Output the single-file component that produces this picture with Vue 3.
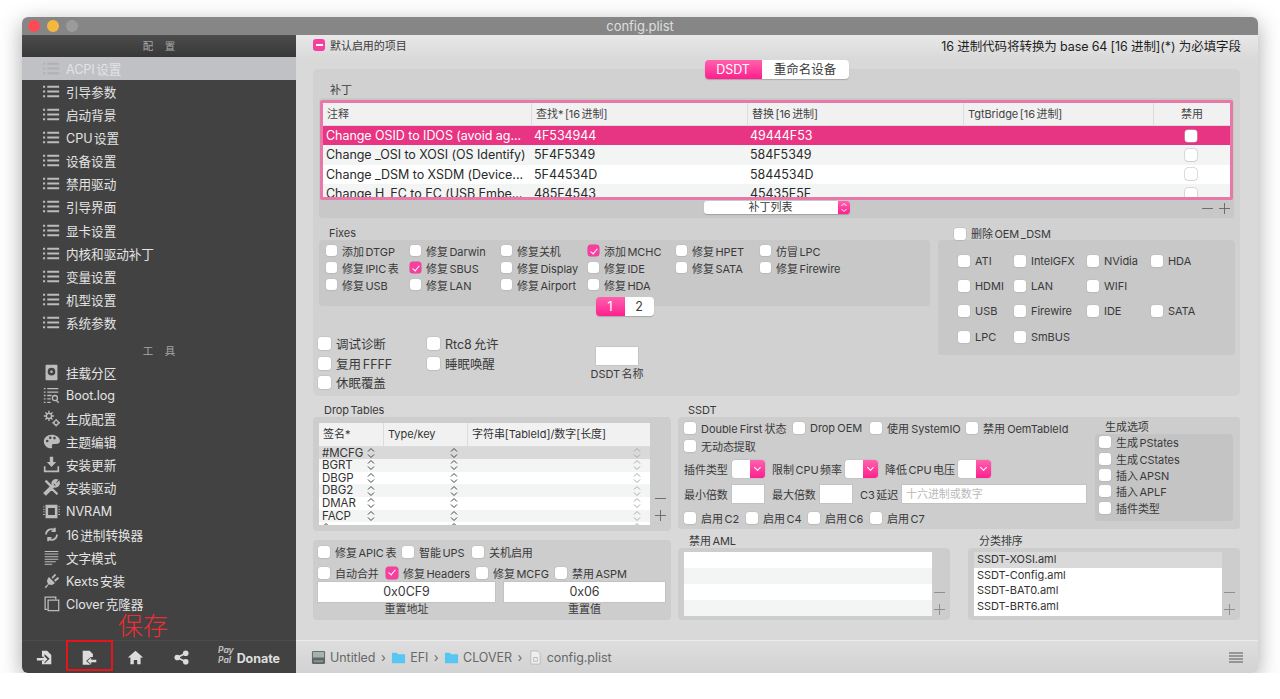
<template>
  <div class="window">
    <div class="titlebar">
      <span class="light red"></span>
      <span class="light yellow"></span>
      <span class="light grey"></span>
      <span class="title">config.plist</span>
    </div>

    <div class="body">
      <aside class="sidebar">
        <div class="side-head first">配&nbsp;&nbsp;&nbsp;&nbsp;置</div>
        <div v-for="(item, i) in configItems" :key="item" class="side-item" :class="{ selected: i === 0 }">
          <svg class="side-icon" viewBox="0 0 20 20">
            <path d="M0 4.500h2.500M5 4.500h14M0 10h2.500M5 10h14M0 15.500h2.500M5 15.500h14" fill="none" stroke="currentColor" stroke-width="2.400" />
          </svg>
          <span>{{ item }}</span>
        </div>

        <div class="side-head second">工&nbsp;&nbsp;&nbsp;&nbsp;具</div>
        <div v-for="tool in tools" :key="tool.label" class="side-item tool">
          <svg class="side-icon" viewBox="0 0 20 20">
            <path v-if="tool.fill" :d="tool.fill" fill="currentColor" fill-rule="evenodd" />
            <path v-if="tool.stroke" :d="tool.stroke" fill="none" stroke="currentColor" :stroke-width="tool.w || 1.5" />
          </svg>
          <span>{{ tool.label }}</span>
        </div>

        <div class="side-spacer"></div>
        <span class="annotation">保存</span>
        <div class="side-tools">
          <span class="tool-btn open">
            <svg viewBox="0 0 20 20"><path d="M7 2h6l5 5v11H7v-4h3v3l6-5.500-6-5.500v3H7z M1 10.500h8v-3l4.500 4.500L9 16.500v-3H1z" fill="currentColor" /></svg>
          </span>
          <span class="tool-btn save">
            <svg viewBox="0 0 20 20"><path d="M2 2h8l4 4v3.500h-2.500L6 14l5.500 4.500H2z" fill="currentColor" /><path d="M7.500 14l4.500-4v2.500h6v3h-6V18z" fill="currentColor" /></svg>
          </span>
          <span class="tool-btn home">
            <svg viewBox="0 0 20 20"><path d="M10 2l9 8h-3v8h-4v-5H8v5H4v-8H1z" fill="currentColor" /></svg>
          </span>
          <span class="tool-btn share">
            <svg viewBox="0 0 20 20"><path d="M15 5L5 10l10 5" fill="none" stroke="currentColor" stroke-width="2" /><circle cx="15" cy="5" r="3.300" fill="currentColor" /><circle cx="5" cy="10" r="3.300" fill="currentColor" /><circle cx="15" cy="15" r="3.300" fill="currentColor" /></svg>
          </span>
          <span class="paypal"><i>Pay</i><i>Pal</i></span>
          <span class="donate">Donate</span>
        </div>
      </aside>

      <main class="main">
        <div class="content">
          <div class="top-row">
            <span class="label-check">
              <span class="mixed"></span>
              默认启用的项目
            </span>
            <span class="hint">16 进制代码将转换为 base 64 [16 进制](*) 为必填字段</span>
          </div>

          <div class="tabs">
            <span class="tab on">DSDT</span>
            <span class="tab">重命名设备</span>
          </div>

          <section class="panel">
            <div class="cap patch-cap">补丁</div>
            <div class="group patch-group">
              <div class="patch-table">
                <div class="patch-row head">
                  <span v-for="h in patchHead" :key="h">{{ h }}</span>
                </div>
                <div v-for="(r, i) in patches" :key="r[0]" class="patch-row" :class="{ picked: i === 0, alt: i % 2 === 1 }">
                  <span>{{ r[0] }}</span>
                  <span>{{ r[1] }}</span>
                  <span>{{ r[2] }}</span>
                  <span></span>
                  <span class="cell-box"><i class="box big"></i></span>
                </div>
              </div>
              <div class="patch-foot">
                <span class="popup">补丁列表
                  <i class="popup-arrow">
                    <svg viewBox="0 0 8 12"><path d="M1.500 4.500L4 2l2.500 2.500M1.500 7.500L4 10l2.500-2.500" fill="none" stroke="#fff" stroke-width="1" /></svg>
                  </i>
                </span>
                <span class="plus-minus wide-pm">
                  <svg viewBox="0 0 12 12"><path d="M0 6h12" stroke="currentColor" /></svg>
                  <svg viewBox="0 0 12 12"><path d="M0 6h12M6 0v12" stroke="currentColor" /></svg>
                </span>
              </div>
            </div>

            <div class="middle">
              <div class="middle-left">
                <div class="cap fixes-cap">Fixes</div>
                <div class="group fixes">
                  <span v-for="f in fixes" :key="f.t" class="chk">
                    <i class="box" :class="{ on: f.on }"></i>{{ f.t }}
                  </span>
                </div>
                <div class="pager">
                  <span class="page on">1</span>
                  <span class="page">2</span>
                </div>
                <div class="lower">
                  <div class="lower-col one">
                    <span v-for="t in ['调试诊断', '复用 FFFF', '休眠覆盖']" :key="t" class="chk large"><i class="box big"></i>{{ t }}</span>
                  </div>
                  <div class="lower-col two">
                    <span v-for="t in ['Rtc8 允许', '睡眠唤醒']" :key="t" class="chk large"><i class="box big"></i>{{ t }}</span>
                  </div>
                  <div class="dsdt-name">
                    <span class="field"></span>
                    <span>DSDT 名称</span>
                  </div>
                </div>
              </div>

              <div class="middle-right">
                <div class="oem-head"><span class="chk"><i class="box big"></i>删除 OEM _DSM</span></div>
                <div class="group oem">
                  <span v-for="(t, i) in oemItems" :key="i" class="chk" :class="{ blank: !t }">
                    <template v-if="t"><i class="box big"></i>{{ t }}</template>
                  </span>
                </div>
              </div>
            </div>
          </section>

          <div class="bottom">
            <div class="bottom-left">
              <div class="cap drop-cap">Drop Tables</div>
              <div class="group drop">
                <div class="drop-table">
                  <div class="drop-row head">
                    <span>签名*</span><span>Type/key</span><span>字符串[TableId]/数字[长度]</span>
                  </div>
                  <div class="drop-body">
                    <div v-for="(t, i) in dropRows" :key="i" class="drop-row" :class="{ first: i === 0, alt: i % 2 === 1 }">
                      <span>{{ t }}<svg viewBox="0 0 8 12"><path d="M1 4.500L4 1.500l3 3M1 7.500l3 3 3-3" fill="none" stroke="#444" /></svg></span>
                      <span><svg viewBox="0 0 8 12"><path d="M1 4.500L4 1.500l3 3M1 7.500l3 3 3-3" fill="none" stroke="#444" /></svg></span>
                      <span><svg viewBox="0 0 8 12"><path d="M1 4.500L4 1.500l3 3M1 7.500l3 3 3-3" fill="none" stroke="#aaa" /></svg></span>
                    </div>
                  </div>
                </div>
                <span class="plus-minus tall">
                  <svg viewBox="0 0 12 12"><path d="M0 6h12" stroke="currentColor" /></svg>
                  <svg viewBox="0 0 12 12"><path d="M0 6h12M6 0v12" stroke="currentColor" /></svg>
                </span>
              </div>

              <div class="group reset">
                <div class="reset-row">
                  <span class="chk w84"><i class="box big"></i>修复 APIC 表</span>
                  <span class="chk w70"><i class="box big"></i>智能 UPS</span>
                  <span class="chk"><i class="box big"></i>关机启用</span>
                </div>
                <div class="reset-row second">
                  <span class="chk w68"><i class="box big"></i>自动合并</span>
                  <span class="chk w90"><i class="box big on"></i>修复 Headers</span>
                  <span class="chk w79"><i class="box big"></i>修复 MCFG</span>
                  <span class="chk"><i class="box big"></i>禁用 ASPM</span>
                </div>
                <div class="reset-fields">
                  <div class="reset-field addr"><span class="value">0x0CF9</span><span>重置地址</span></div>
                  <div class="reset-field val"><span class="value">0x06</span><span>重置值</span></div>
                </div>
              </div>
            </div>

            <div class="bottom-right">
              <div class="cap ssdt-cap">SSDT</div>
              <div class="group ssdt">
                <div class="ssdt-main">
                  <div class="ssdt-row r1">
                    <span class="chk w109"><i class="box big"></i>Double First 状态</span>
                    <span class="chk w77"><i class="box big"></i>Drop OEM</span>
                    <span class="chk w96"><i class="box big"></i>使用 SystemIO</span>
                    <span class="chk"><i class="box big"></i>禁用 OemTableId</span>
                  </div>
                  <div class="ssdt-row r2">
                    <span class="chk"><i class="box big"></i>无动态提取</span>
                  </div>
                  <div class="ssdt-row r3">
                    <span class="lbl w48">插件类型</span>
                    <span class="combo"><i></i></span>
                    <span class="lbl w73">限制 CPU 频率</span>
                    <span class="combo"><i></i></span>
                    <span class="lbl w73">降低 CPU 电压</span>
                    <span class="combo"><i></i></span>
                  </div>
                  <div class="ssdt-row r4">
                    <span class="lbl w48">最小倍数</span>
                    <span class="field small"></span>
                    <span class="lbl w48 m8">最大倍数</span>
                    <span class="field small"></span>
                    <span class="lbl w42 m8">C3 延迟</span>
                    <span class="field wide">十六进制或数字</span>
                  </div>
                  <div class="ssdt-row r5">
                    <span v-for="t in ['启用 C2', '启用 C4', '启用 C6', '启用 C7']" :key="t" class="chk w62"><i class="box big"></i>{{ t }}</span>
                  </div>
                </div>
                <div class="gen">
                  <div class="gen-cap">生成选项</div>
                  <div class="gen-box">
                    <span v-for="t in ['生成 PStates', '生成 CStates', '插入 APSN', '插入 APLF', '插件类型']" :key="t" class="chk"><i class="box big"></i>{{ t }}</span>
                  </div>
                </div>
              </div>

              <div class="aml-wrap">
                <div class="aml-col">
                  <div class="cap aml-cap">禁用 AML</div>
                  <div class="group aml">
                    <div class="aml-list">
                      <div v-for="n in 4" :key="n" class="aml-row" :class="{ alt: n % 2 === 0 }"></div>
                    </div>
                    <span class="plus-minus tall faint">
                      <svg viewBox="0 0 12 12"><path d="M0 6h12" stroke="currentColor" /></svg>
                      <svg viewBox="0 0 12 12"><path d="M0 6h12M6 0v12" stroke="currentColor" /></svg>
                    </span>
                  </div>
                </div>
                <div class="aml-col">
                  <div class="cap aml-cap">分类排序</div>
                  <div class="group aml">
                    <div class="aml-list sorted">
                      <div v-for="(t, i) in sortRows" :key="t" class="aml-row" :class="{ grey: i === 0 }">{{ t }}</div>
                    </div>
                    <span class="plus-minus tall faint">
                      <svg viewBox="0 0 12 12"><path d="M0 6h12" stroke="currentColor" /></svg>
                      <svg viewBox="0 0 12 12"><path d="M0 6h12M6 0v12" stroke="currentColor" /></svg>
                    </span>
                  </div>
                </div>
              </div>
            </div>
          </div>
        </div>

        <footer class="status">
          <svg class="crumb-icon" viewBox="0 0 16 16"><rect x="1" y="1" width="14" height="14" rx="1.500" fill="#5f6668" /><rect x="2" y="2" width="12" height="6" fill="#a9b0b2" /><rect x="3" y="11" width="10" height="2" fill="#8d9496" /></svg>
          <span>Untitled</span><span class="sep">›</span>
          <svg class="crumb-icon" viewBox="0 0 16 16"><path d="M1 3h5l1.500 1.500H15V14H1z" fill="#58c6f2" /></svg>
          <span>EFI</span><span class="sep">›</span>
          <svg class="crumb-icon" viewBox="0 0 16 16"><path d="M1 3h5l1.500 1.500H15V14H1z" fill="#58c6f2" /></svg>
          <span>CLOVER</span><span class="sep">›</span>
          <svg class="crumb-icon" viewBox="0 0 16 16"><path d="M3 1h7l3 3v11H3z" fill="#eee" stroke="#bbb" /><path d="M6 8h4v4H6z" fill="none" stroke="#bbb" /></svg>
          <span>config.plist</span>
          <svg class="burger" viewBox="0 0 14 11"><path d="M0 1h14M0 4h14M0 7h14M0 10h14" stroke="#555" stroke-width="1" /></svg>
        </footer>
      </main>
    </div>
  </div>
</template>

<script setup>
const configItems = [
  "ACPI 设置", "引导参数", "启动背景", "CPU 设置", "设备设置", "禁用驱动",
  "引导界面", "显卡设置", "内核和驱动补丁", "变量设置", "机型设置", "系统参数",
];

const tools = [
  { label: "挂载分区", fill: "M4 1h12a1 1 0 0 1 1 1v16a1 1 0 0 1-1 1H4a1 1 0 0 1-1-1V2a1 1 0 0 1 1-1z M10 4.500a4.500 4.500 0 1 0 0 9 4.500 4.500 0 0 0 0-9z M10 7.500a1.500 1.500 0 1 1 0 3 1.500 1.500 0 0 1 0-3z" },
  { label: "Boot.log", stroke: "M1 2h2M5 2h13M1 6h2M5 6h13M1 10h2M5 10h5M1 14h2M5 14h4M1 18h2M5 18h4M11 13a3 3 0 1 0 6 0 3 3 0 1 0-6 0M15.500 15.500l3 3" },
  { label: "生成配置", w: 1.6, stroke: "M4 7a3 3 0 1 0 6 0 3 3 0 1 0-6 0M7 1v2.500M7 10.500V13M1 7h2.500M10.500 7H13M2.800 2.800l1.800 1.800M9.400 9.400l1.800 1.800M2.800 11.200l1.800-1.800M9.400 4.600l1.800-1.800M13 15a2.500 2.500 0 1 0 5 0 2.500 2.500 0 1 0-5 0M15.500 10.500v2M15.500 17.500v2M11 15h2M18 15h2" },
  { label: "主题编辑", fill: "M10 2C5 2 1 5.500 1 10s4 8 8 8c1.600 0 2.200-1 1.600-2.200-.6-1.300.2-2.800 1.700-2.800h3.200c2.500 0 4.500-1.300 4.500-3.800C20 5 15 2 10 2z M5 8a1.500 1.500 0 1 0 0 3 1.500 1.500 0 0 0 0-3z M8.500 4a1.500 1.500 0 1 0 0 3 1.500 1.500 0 0 0 0-3z M13.500 4.500a1.500 1.500 0 1 0 0 3 1.500 1.500 0 0 0 0-3z" },
  { label: "安装更新", fill: "M8 1h4v6h3.500L10 13 4.500 7H8z M1 12h2v5h14v-5h2v7H1z" },
  { label: "安装驱动", w: 2.600, fill: "M2 3l2-2 7 7-2 2z", stroke: "M8 9l9 9M16 1.500a4 4 0 0 0-4.500 5.500L2 16.500 3.500 18 13 8.500a4 4 0 0 0 5.500-4.500L16 6.500 13.800 4.500z" },
  { label: "NVRAM", fill: "M3 2h14v16H3z M6 6v8h8V6z M0 4h2v1H0z M0 7h2v1H0z M0 10h2v1H0z M0 13h2v1H0z M18 4h2v1h-2z M18 7h2v1h-2z M18 10h2v1h-2z M18 13h2v1h-2z" },
  { label: "16 进制转换器", w: 2, stroke: "M3.500 10a6.500 6.500 0 0 1 10.500-5M16.500 10a6.500 6.500 0 0 1-10.500 5M14 2v4h-4M6 18v-4h4" },
  { label: "文字模式", w: 1.200, stroke: "M2 3h16M2 6h16M2 9h16M2 12h16M2 15h13M2 18h9" },
  { label: "Kexts 安装", fill: "M7 6l7 7c-2 2.500-5 3-7 1.500L3.500 19 2 17.500 6 14C4 12 4.500 8.500 7 6z M10 6.500l4-4.500 1.500 1.500L11.500 8z M13 9.500L17.500 6 19 7.500 14.500 11.500z" },
  { label: "Clover 克隆器", w: 1.500, stroke: "M5 17H2.500V2.500H15V5M6 6h12.500v12.500H6z" },
];

const patchHead = ["注释", "查找* [16 进制]", "替换 [16 进制]", "TgtBridge [16 进制]", "禁用"];

const patches = [
  ["Change OSID to IDOS (avoid ag...", "4F534944", "49444F53"],
  ["Change _OSI to XOSI (OS Identify)", "5F4F5349", "584F5349"],
  ["Change _DSM to XSDM (Device...", "5F44534D", "5844534D"],
  ["Change H_EC to EC (USB Embe...", "485F4543", "45435F5F"],
];

const fixes = [
  { t: "添加 DTGP" }, { t: "修复 Darwin" }, { t: "修复关机" }, { t: "添加 MCHC", on: true }, { t: "修复 HPET" }, { t: "仿冒 LPC" },
  { t: "修复 IPIC 表" }, { t: "修复 SBUS", on: true }, { t: "修复 Display" }, { t: "修复 IDE" }, { t: "修复 SATA" }, { t: "修复 Firewire" },
  { t: "修复 USB" }, { t: "修复 LAN" }, { t: "修复 Airport" }, { t: "修复 HDA" },
];

const oemItems = [
  "ATI", "IntelGFX", "NVidia", "HDA",
  "HDMI", "LAN", "WIFI", "",
  "USB", "Firewire", "IDE", "SATA",
  "LPC", "SmBUS", "", "",
];

const dropRows = ["#MCFG", "BGRT", "DBGP", "DBG2", "DMAR", "FACP", ""];

const sortRows = ["SSDT-XOSI.aml", "SSDT-Config.aml", "SSDT-BAT0.aml", "SSDT-BRT6.aml"];
</script>

<style>
html, body {
  background: #fff;
}
</style>

<style scoped>
.window {
  width: 1236px;
  height: 656px;
  margin: 17px 0 0 22px;
  border-radius: 6px;
  overflow: hidden;
  box-shadow: 0 6px 22px rgba(0, 0, 0, 0.35);
  font-family: Inter, "Noto Sans CJK SC", sans-serif;
  font-size: 11px;
  word-spacing: -1.500px;
  letter-spacing: -0.050px;
  color: #3a3a3a;
  display: flex;
  flex-direction: column;
}

/* title bar */
.titlebar {
  height: 18px;
  background: #868686;
  display: flex;
  align-items: center;
  gap: 7px;
  padding-left: 6px;
  position: relative;
  flex: none;
}
.light {
  width: 12px;
  height: 12px;
  border-radius: 50%;
}
.red { background: #fc4b52; }
.yellow { background: #f4b83e; }
.grey { background: #9b9b9b; }
.title {
  position: absolute;
  left: 0;
  right: 0;
  text-align: center;
  color: #dedede;
  font-size: 13px;
}

.body {
  flex: 1;
  display: flex;
  min-height: 0;
}

/* sidebar */
.sidebar {
  width: 274px;
  flex: none;
  background: #424242;
  display: flex;
  flex-direction: column;
  position: relative;
  color: #e4e4e4;
  font-size: 12.600px;
  word-spacing: -2px;
}
.side-head {
  text-align: center;
  font-size: 10.500px;
  color: #a8a8a8;
  word-spacing: 0;
}
.side-head.first {
  height: 22px;
  line-height: 24px;
  background: linear-gradient(#4c4c4c, #383838);
}
.side-head.second {
  height: 26.500px;
  line-height: 34px;
}
.side-item {
  height: 23.150px;
  display: flex;
  align-items: center;
  padding: 0 0 1px 21px;
  box-sizing: border-box;
  flex: none;
}
.side-item span {
  margin-left: 6px;
}
.side-item.selected {
  background: #c0c1c5;
  color: #e2e3e6;
}
.side-item.selected .side-icon {
  color: #b0b1b4;
}
.side-icon {
  width: 17px;
  height: 17px;
  flex: none;
  color: #bcbcbc;
}
.side-spacer {
  flex: 1;
}
.side-tools {
  height: 33px;
  flex: none;
  display: flex;
  align-items: flex-start;
  border-top: 1px solid #4b4b4b;
  color: #dcdcdc;
  padding-left: 14px;
  box-sizing: border-box;
}
.tool-btn {
  height: 30px;
  display: flex;
  align-items: center;
  justify-content: center;
  box-sizing: border-box;
}
.tool-btn svg {
  width: 17px;
  height: 17px;
  margin-top: 3px;
}
.tool-btn.open {
  width: 30px;
  justify-content: flex-start;
}
.tool-btn.save {
  width: 47px;
  border: 2px solid #e8141c;
  margin-top: -1px;
  height: 31px;
}
.tool-btn.home { width: 44px; }
.tool-btn.share { width: 48px; }
.annotation {
  position: absolute;
  left: 96px;
  bottom: 32px;
  font-size: 25px;
  font-weight: 300;
  line-height: 30px;
  color: #f02d35;
}
.paypal {
  display: flex;
  flex-direction: column;
  margin: 4px 0 0 13px;
  font-size: 8.500px;
  line-height: 10px;
  font-weight: 700;
  color: #bdbdbd;
}
.donate {
  font-size: 12.500px;
  font-weight: 700;
  color: #dedede;
  margin: 10px 0 0 3px;
}

/* main */
.main {
  flex: 1;
  display: flex;
  flex-direction: column;
  background: linear-gradient(#e8e8e8, #d9d9d9 24px);
  min-width: 0;
}
.content {
  flex: 1;
  padding: 0 18px 0 17px;
  min-height: 0;
}
.top-row {
  height: 22px;
  display: flex;
  align-items: center;
  justify-content: space-between;
  padding-bottom: 2px;
  box-sizing: border-box;
  margin-right: -1px;
}
.label-check {
  display: flex;
  align-items: center;
  gap: 5px;
}
.mixed {
  width: 12px;
  height: 12px;
  border-radius: 3px;
  background: #f73f9f;
  position: relative;
}
.mixed::after {
  content: "";
  position: absolute;
  left: 2.500px;
  right: 2.500px;
  top: 5px;
  height: 2px;
  background: #fff;
}
.hint {
  font-size: 12.500px;
  word-spacing: -0.300px;
  color: #1e1e1e;
}

.tabs {
  display: flex;
  justify-content: center;
  margin-top: 3px;
  height: 19px;
  position: relative;
  z-index: 1;
}
.tab {
  width: 87px;
  background: #fff;
  text-align: center;
  line-height: 19px;
  font-size: 12.500px;
  border-radius: 0 4px 4px 0;
  box-shadow: 0 1px 1px rgba(0, 0, 0, 0.2);
}
.tab.on {
  width: 57px;
  background: linear-gradient(#ff62ad, #ff1f8e);
  color: #fff;
  border-radius: 4px 0 0 4px;
}

.panel {
  height: 327px;
  margin-top: -10px;
  background: #d1d1d1;
  border-radius: 5px;
  padding: 0 6px;
  box-sizing: border-box;
}
.cap {
  line-height: 14px;
  color: #3a3a3a;
}
.patch-cap {
  padding: 14px 0 0 11px;
  height: 29px;
  box-sizing: border-box;
}
.group {
  background: #c8c8c8;
  border-radius: 4px;
}
.patch-group {
  height: 120px;
  padding: 2px 1px 0;
  box-sizing: border-box;
}
.patch-table {
  height: 100px;
  border: 3px solid #e878a8;
  border-radius: 2px;
  box-sizing: border-box;
  overflow: hidden;
  background: #fff;
}
.patch-row {
  display: grid;
  grid-template-columns: 208px 216px 216px 190px 77px;
  height: 19.400px;
  font-size: 12.500px;
  line-height: 19.400px;
  word-spacing: 0;
  color: #2a2a2a;
  white-space: nowrap;
}
.patch-row span {
  padding-left: 3px;
  overflow: hidden;
}
.patch-row.alt {
  background: #f3f5f4;
}
.patch-row.picked {
  background: #e83583;
  color: #fff;
}
.patch-row.head {
  height: 23px;
  line-height: 23px;
  font-size: 11px;
  word-spacing: -1.500px;
  background: #f1f1f1;
  border-bottom: 1px solid #dcdcdc;
  box-sizing: border-box;
  color: #444;
}
.patch-row.head span {
  border-left: 1px solid #dcdcdc;
  padding-left: 4px;
}
.patch-row.head span:first-child {
  border-left: none;
}
.patch-row.head span:last-child {
  text-align: center;
  padding-left: 0;
}
.cell-box {
  display: flex;
  align-items: center;
  justify-content: center;
}
.patch-foot {
  position: relative;
  display: flex;
  justify-content: center;
  padding-top: 1px;
}
.popup {
  width: 146px;
  height: 13px;
  background: #fff;
  border-radius: 3px;
  text-align: center;
  line-height: 13px;
  position: relative;
  box-shadow: 0 1px 1px rgba(0, 0, 0, 0.2);
  padding-right: 12px;
  box-sizing: border-box;
}
.popup-arrow {
  position: absolute;
  right: 0;
  top: 0;
  width: 12px;
  height: 13px;
  border-radius: 0 3px 3px 0;
  background: linear-gradient(#ff62ad, #ff1f8e);
  display: flex;
  justify-content: center;
}
.popup-arrow svg {
  width: 8px;
  height: 13px;
}
.plus-minus {
  display: flex;
  color: #666;
}
.plus-minus svg {
  width: 11px;
  height: 11px;
  flex: none;
}
.wide-pm {
  position: absolute;
  right: 3px;
  top: 3px;
  gap: 6px;
}
.plus-minus.tall {
  flex-direction: column;
  gap: 6px;
  align-self: flex-end;
  margin-left: 2px;
}
.plus-minus.faint {
  color: #8a8a8a;
}

.middle {
  display: flex;
  gap: 8px;
}
.middle-left {
  width: 611px;
  flex: none;
}
.middle-right {
  width: 297px;
  flex: none;
}
.fixes-cap {
  padding: 8px 0 0 10px;
  height: 22px;
  box-sizing: border-box;
}
.fixes {
  height: 66px;
  padding: 2px 0 0 7px;
  box-sizing: border-box;
  display: grid;
  grid-template-columns: 84px 91px 87px 88px 84px auto;
  grid-auto-rows: 17px;
}
.chk {
  display: flex;
  align-items: center;
  white-space: nowrap;
  color: #3a3a3a;
}
.box {
  width: 11px;
  height: 11px;
  flex: none;
  margin-right: 5px;
  background: #fff;
  border-radius: 3px;
  box-shadow: 0 0 0 0.500px #bbb, 0 1px 1px rgba(0, 0, 0, 0.08);
  position: relative;
  display: block;
}
.box.big {
  width: 12px;
  height: 12px;
}
.box.on {
  background: #f73f9f;
  box-shadow: 0 0 0 0.500px #e03a8f;
}
.box.on::after {
  content: "";
  position: absolute;
  left: 3.500px;
  top: 1.500px;
  width: 3px;
  height: 6px;
  border: solid #fff;
  border-width: 0 1.300px 1.300px 0;
  transform: rotate(40deg);
}
.pager {
  display: flex;
  justify-content: center;
  margin-top: -9px;
  height: 19px;
  position: relative;
}
.page {
  width: 29px;
  background: #fff;
  text-align: center;
  line-height: 19px;
  font-size: 12.500px;
  border-radius: 0 4px 4px 0;
  box-shadow: 0 1px 1px rgba(0, 0, 0, 0.2);
}
.page.on {
  background: linear-gradient(#ff62ad, #ff1f8e);
  color: #fff;
  border-radius: 4px 0 0 4px;
}
.lower {
  display: flex;
  margin: 18px 0 0 -1px;
}
.lower-col {
  display: flex;
  flex-direction: column;
}
.lower-col.one { width: 109px; }
.lower-col.two { width: 164px; }
.chk.large {
  font-size: 12.500px;
  height: 19.500px;
}
.chk.large .box {
  width: 13px;
  height: 13px;
}
.dsdt-name {
  width: 52px;
  display: flex;
  flex-direction: column;
  align-items: center;
  padding-top: 13px;
  line-height: 14px;
  gap: 2px;
  white-space: nowrap;
}
.field {
  display: block;
  background: #fff;
  box-shadow: 0 0 0 0.500px #b9b9b9;
}
.dsdt-name .field {
  width: 42px;
  height: 18px;
}
.oem-head {
  height: 22px;
  padding: 9px 0 0 16px;
  box-sizing: border-box;
  line-height: 14px;
}
.oem {
  height: 115px;
  padding: 8px 0 0 20px;
  box-sizing: border-box;
  display: grid;
  grid-template-columns: 56px 73px 64px auto;
  grid-auto-rows: 25.300px;
}
.chk.blank {
  visibility: hidden;
}

/* lower half */
.bottom {
  display: flex;
  gap: 7px;
}
.bottom-left {
  width: 358px;
  flex: none;
}
.bottom-right {
  width: 562px;
  flex: none;
}
.drop-cap, .ssdt-cap {
  height: 21px;
  padding: 7px 0 0 11px;
  box-sizing: border-box;
  line-height: 14px;
}
.ssdt-cap {
  padding-left: 10px;
}
.drop {
  height: 114px;
  padding: 6px 5px 0 6px;
  box-sizing: border-box;
  display: flex;
  gap: 3px;
  background: #cdcdcd;
}
.drop .plus-minus {
  padding-bottom: 10px;
}
.drop-table {
  width: 331px;
  height: 102px;
  background: #fff;
  overflow: hidden;
  flex: none;
}
.drop-row {
  display: grid;
  grid-template-columns: 64px 84px 183px;
  height: 12.600px;
  line-height: 12.600px;
  font-size: 11.500px;
  color: #333;
}
.drop-row span {
  display: flex;
  justify-content: flex-end;
  align-items: center;
  padding: 0 9px 0 3px;
  position: relative;
}
.drop-row span:first-child {
  justify-content: space-between;
  padding-right: 8px;
}
.drop-row svg {
  width: 8px;
  height: 12px;
  flex: none;
}
.drop-row.alt {
  background: #f3f5f4;
}
.drop-row.first {
  background: #d9d9d9;
}
.drop-row.head {
  height: 23.600px;
  line-height: 23px;
  font-size: 11px;
  background: #f1f1f1;
  border-bottom: 1px solid #dcdcdc;
  box-sizing: border-box;
}
.drop-row.head span {
  justify-content: flex-start;
  padding: 0 0 0 4px;
  border-left: 1px solid #dcdcdc;
  white-space: nowrap;
}
.drop-row.head span:first-child {
  border-left: none;
}
.drop-body {
  overflow: hidden;
}
.reset {
  height: 80px;
  margin-top: 9px;
  padding: 2px 5px 0;
  box-sizing: border-box;
  background: #cdcdcd;
}
.reset-row {
  display: flex;
  height: 19px;
}
.reset-row.second {
  margin-top: 2px;
}
.w84 { width: 84px; }
.w70 { width: 70px; }
.w68 { width: 68px; }
.w90 { width: 90px; }
.w79 { width: 79px; }
.reset-fields {
  display: flex;
  gap: 9px;
}
.reset-field {
  display: flex;
  flex-direction: column;
  align-items: center;
  line-height: 13px;
}
.reset-field.addr { width: 177px; }
.reset-field.val { width: 161px; }
.value {
  width: 100%;
  height: 20px;
  line-height: 20px;
  text-align: center;
  background: #fff;
  font-size: 12.500px;
  box-shadow: 0 0 0 0.500px #b9b9b9;
}
.reset-field span:last-child {
  margin-top: 1px;
}

.ssdt {
  height: 112px;
  background: #cdcdcd;
  display: flex;
  padding-left: 6px;
  box-sizing: border-box;
}
.ssdt-main {
  width: 411px;
  flex: none;
}
.ssdt-row {
  display: flex;
  align-items: center;
}
.r1 { height: 22px; word-spacing: -0.800px; }
.r2 { height: 14px; margin-bottom: 3.500px; }
.r3 { height: 25px; }
.r4 { height: 25px; }
.r5 { height: 23px; }
.w109 { width: 109px; }
.w77 { width: 77px; }
.w96 { width: 96px; }
.w62 { width: 62px; }
.w48 { width: 48px; flex: none; }
.w73 { width: 73px; flex: none; margin-left: 7px; }
.w42 { width: 42px; flex: none; }
.m8 { margin-left: 8px; }
.lbl {
  white-space: nowrap;
}
.combo {
  width: 33px;
  height: 18px;
  background: #fff;
  border-radius: 3px;
  box-shadow: 0 0 0 0.500px #b9b9b9;
  display: flex;
  justify-content: flex-end;
  flex: none;
}
.combo i {
  width: 15px;
  height: 18px;
  border-radius: 0 3px 3px 0;
  background: linear-gradient(#ff62ad, #ff1f8e);
  position: relative;
}
.combo i::after {
  content: "";
  position: absolute;
  left: 5px;
  top: 5px;
  width: 4px;
  height: 4px;
  border: solid #fff;
  border-width: 0 1.200px 1.200px 0;
  transform: rotate(45deg);
}
.field.small {
  width: 32px;
  height: 18px;
  flex: none;
}
.field.wide {
  width: 184px;
  height: 18px;
  flex: none;
  line-height: 18px;
  padding-left: 4px;
  box-sizing: border-box;
  color: #b9b9b9;
}
.gen {
  width: 138px;
  flex: none;
}
.gen-cap {
  height: 17px;
  line-height: 20px;
  padding-left: 10px;
}
.gen-box {
  height: 87px;
  background: #c4c4c4;
  border-radius: 4px;
  padding: 0 0 0 4px;
  box-sizing: border-box;
  display: flex;
  flex-direction: column;
}
.gen-box .chk {
  height: 16.400px;
}
.aml-wrap {
  display: flex;
  gap: 18px;
}
.aml-col {
  width: 272px;
}
.aml-cap {
  height: 19px;
  padding: 5px 0 0 11px;
  box-sizing: border-box;
  line-height: 14px;
}
.aml {
  height: 72px;
  background: #cdcdcd;
  padding: 4px 0 0 6px;
  box-sizing: border-box;
  display: flex;
}
.aml .plus-minus {
  padding-bottom: 5px;
}
.aml-list {
  width: 248px;
  height: 64px;
  background: #fff;
  flex: none;
  overflow: hidden;
}
.aml-row {
  height: 16px;
  line-height: 16px;
  padding-left: 3px;
  color: #333;
  word-spacing: 0;
}
.sorted .aml-row {
  height: 15.500px;
  line-height: 15.500px;
}
.aml-row.alt {
  background: #f3f5f4;
}
.aml-row.grey {
  background: #d9d9d9;
}

/* status bar */
.status {
  height: 33px;
  flex: none;
  background: linear-gradient(#dedede, #d2d2d2);
  border-top: 1px solid #ececec;
  box-sizing: border-box;
  display: flex;
  align-items: center;
  padding: 0 15px;
  font-size: 12.500px;
  color: #686868;
}
.crumb-icon {
  width: 15px;
  height: 15px;
  margin-right: 4px;
}
.sep {
  margin: 0 5.500px;
}
.burger {
  width: 14px;
  height: 11px;
  margin-left: auto;
}
</style>
